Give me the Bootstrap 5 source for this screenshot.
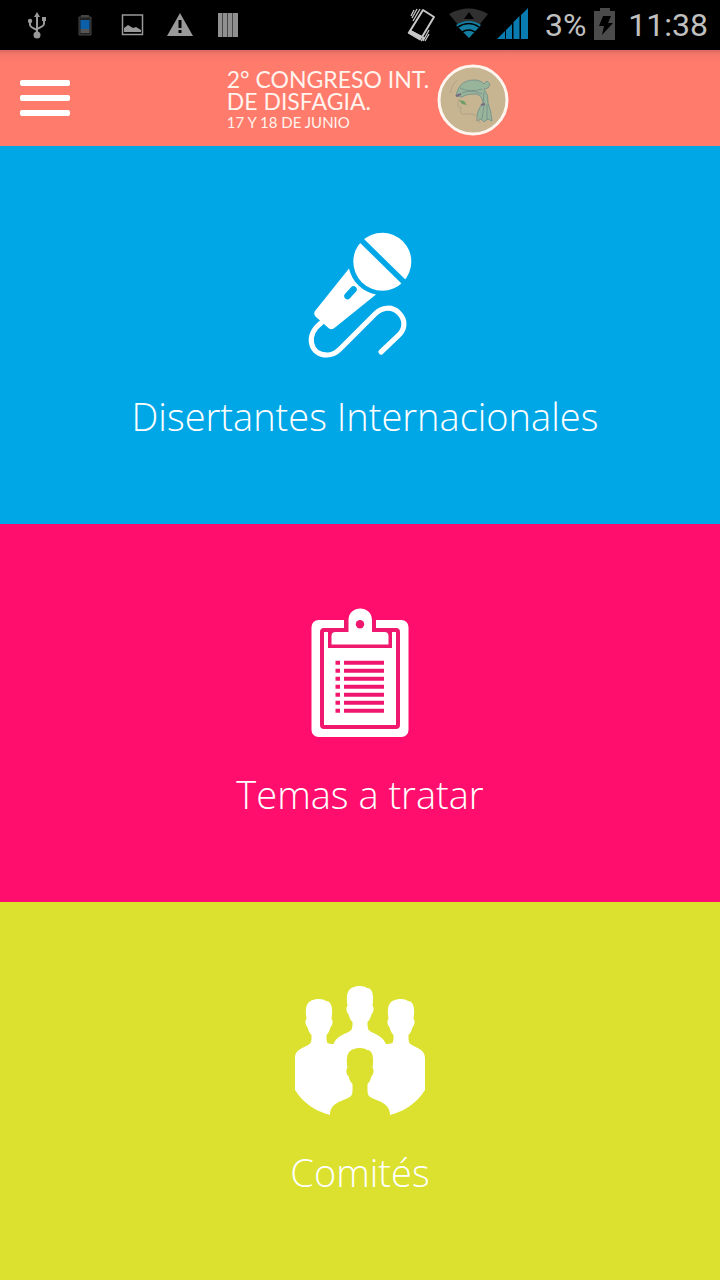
<!DOCTYPE html>
<html lang="es">
<head>
<meta charset="utf-8">
<meta name="viewport" content="width=device-width, initial-scale=1">
<title>2° Congreso Int. de Disfagia</title>
<link href="https://cdn.jsdelivr.net/npm/bootstrap@5.3.0/dist/css/bootstrap.min.css" rel="stylesheet">
<style>
  body { font-family: "Open Sans", "Noto Sans", sans-serif; }
  .status-strip { height: 50px; padding: 0 12px 0 13px; background: #000; color: #c0c0c0; font: 400 32px/52px Roboto, sans-serif; }
  .top-header {
    height: 96px; padding: 0 4px 0 20px; background: #ff7b6b linear-gradient(#d9695f, #f5766a 4px, #ff7b6b 12px) no-repeat;
    display: grid; grid-template-columns: 1fr auto 1fr; align-items: center;
  }
  .menu-toggle { width: 50px; height: 36px; }
  .menu-toggle i { height: 6px; border-radius: 2px; background: #fff; }
  .event-name { font: 400 23px/22px Lato, sans-serif; color: #fff3ee; }
  .event-date { font-size: 15px; line-height: 20px; }
  .tile { color: #fff; gap: 32px; font-size: 38px; font-weight: 300; line-height: 48px; min-height: 240px; }
  .tile:hover { color: #fff; }
  .tile-blue { background: #00a7e7; --tile: #00a7e7; }
  .tile-pink { background: #ff0e6d; --tile: #f0186e; }
  .tile-lime { background: #dbe12e; --tile: #dbe12e; }
</style>
</head>
<body class="d-flex flex-column min-vh-100">

<div class="status-strip d-flex align-items-center justify-content-between">
  <div class="d-flex">
    <svg width="48" height="50" viewBox="0 0 48 50" fill="none" stroke="#999" stroke-width="2"><path d="M24 34V15M17 22v3q0 2 7 5M31 21v3q0 2-7 5"/><path d="M24 12l3 5h-6zM29 17h4v4h-4z" fill="#999" stroke="none"/><circle cx="17" cy="21" r="2.200" fill="#999" stroke="none"/><circle cx="24" cy="35" r="3.500" fill="#999" stroke="none"/></svg>
    <svg width="48" height="50" viewBox="0 0 48 50"><path d="M18 17h12v18H18z" fill="#222" stroke="#444"/><path d="M20 15h8v2h-8z" fill="#444"/><path d="M19.500 20h9v9h-9z" fill="#0a5fa8"/><path d="M19.500 29h9v4h-9z" fill="#555"/></svg>
    <svg width="48" height="50" viewBox="0 0 48 50"><path d="M13.500 15h20v19.500h-20z" fill="none" stroke="#999" stroke-width="1.500"/><path d="M15 32v-4l4-3 5 3 3-1 5 3v2z" fill="#999"/></svg>
    <svg width="48" height="50" viewBox="0 0 48 50"><path d="M23 13l13 23H10z" fill="#999"/><path d="M21.500 20h3v8h-3zM21.500 30h3v3h-3z" fill="#000"/></svg>
    <svg width="48" height="50" viewBox="0 0 48 50"><path d="M13 13h4.500v24h-4.500zM18 13h4.500v24h-4.500zM23 13h4.500v24h-4.500zM28 13h5v24h-5z" fill="#909090"/></svg>
  </div>
  <div class="d-flex align-items-center">
    <svg width="30" height="50" viewBox="0 0 30 50" fill="none" stroke="#c8c8c8"><path d="M16 10l11 7-12 20-12-6z" stroke-width="2" stroke-linejoin="round"/><path d="M3 30l12 7-2 3-12-7z" fill="#c8c8c8"/><path d="M13 9L6 21M10 9L5 18M7 10l-3 6M22 30l-6 11M22 34l-4 7M17 37l-3 4" stroke-width="1.300"/></svg>
    <svg class="ms-2" width="48" height="50" viewBox="0 0 48 50"><path d="M4 14q20-11 39 0L24 38z" fill="#303030"/><path d="M24 12l5 7H19z" fill="#000"/><path d="M11 25q13-8 25 0L24 38z" fill="#157fa3"/><path d="M13 27q11-7 21 0M17 32q7-4 13 0" fill="none" stroke="#000" stroke-width="1.500"/></svg>
    <svg width="48" height="50" viewBox="0 0 48 50"><path d="M4 39l8-8v8zM13 30l6-6v15h-6zM20.500 22l6-6v23h-6zM28 15l7-7v31h-7z" fill="#087bb0"/></svg>
    <span class="ms-1 me-2">3%</span>
    <svg width="22" height="50" viewBox="0 0 22 50"><path d="M0 11h6V8h10v3h5v29H0z" fill="#4b4b4b"/><path d="M9 16h8l-3 7h5L8 35l2-9H5z" fill="#000"/></svg>
    <time class="ms-2 ps-1">11:38</time>
  </div>
</div>

<header class="top-header">
  <button class="menu-toggle btn p-0 border-0 rounded-0 d-flex flex-column justify-content-between align-items-stretch" type="button" aria-label="Menú"><i></i><i></i><i></i></button>
  <div class="d-flex align-items-center gap-2 mt-1">
    <div>
      <h1 class="event-name mb-0 text-nowrap">2° CONGRESO INT.<br>DE DISFAGIA.</h1>
      <p class="event-name event-date mb-0">17 Y 18 DE JUNIO</p>
    </div>
    <svg width="72" height="72" viewBox="0 0 72 72" role="img" aria-label="Logo del congreso">
      <circle cx="36" cy="36" r="34" fill="#c7b491" stroke="#fff5ef" stroke-width="3"/>
      <g stroke="#7d958b" stroke-linejoin="round">
        <path d="M20 28q4-13 19-12 6 1 8 4l3-3 3 3-2 4-4 1q5 6 4 14 3 7 4 18l-4-2-4 3-3-3-4 2q-1-10 6-18-1-9-8-9-9 0-13 3l-6-1z" fill="#98b59c"/>
        <path d="M23 24q9 5 22 1M25 29q10-4 20 1M47 28q-1 10 0 13l-2 14M50 40v16" fill="none"/>
      </g>
      <path d="M19 32l5-2M44 41l4-1" fill="none" stroke="#776b80" stroke-width="2"/>
      <path d="M20 16q-7 7-6 13M22 35q-3 8 2 9-2 7 4 6 13-2 15 9" fill="none" stroke="#b3a487"/>
      <path d="M22 36l5 1 3 4-5-1z" fill="#6f9d68"/>
    </svg>
  </div>
</header>

<main class="d-flex flex-column flex-grow-1">
  <a href="#disertantes" class="tile tile-blue d-flex flex-column flex-fill align-items-center justify-content-center text-decoration-none text-center">
    <svg width="130" height="130" viewBox="0 0 130 130" fill="#fff" aria-hidden="true">
      <circle cx="87.300" cy="31.700" r="29"/>
      <path d="M62 6l52 51" stroke="var(--tile)" stroke-width="5.500"/>
      <path d="M54 38.500A34 34 0 0 0 81 64.500L40 97.500q-3 3-6 1L21 87q-3-3-1-6z"/>
      <path d="M52.500 66l6-6.500" stroke="var(--tile)" stroke-width="6.500" stroke-linecap="round"/>
      <path d="M26 93C10 105 15 125 32 125c6 0 10-3 13-6l35-35c7-7 17-8 24-1s6 16 0 22l-18 17" fill="none" stroke="#fff" stroke-width="5.200" stroke-linecap="round"/>
    </svg>
    <span>&nbsp;Disertantes Internacionales</span>
  </a>
  <a href="#temas" class="tile tile-pink d-flex flex-column flex-fill align-items-center justify-content-center text-decoration-none text-center">
    <svg width="130" height="130" viewBox="0 0 130 130" fill="#fff" aria-hidden="true">
      <rect x="16.500" y="12" width="97" height="117" rx="7"/>
      <rect x="27" y="22" width="76" height="97" rx="2" fill="none" stroke="var(--tile)" stroke-width="4"/>
      <path d="M49 12h32v12h16v16H33V24h16z" fill="var(--tile)"/>
      <path d="M36.500 36.500V28q0-4 4-4h13V12C53.500-3.500 77-3.500 77 12v12h12.500q4 0 4 4v8.500z"/>
      <circle cx="65" cy="16.200" r="4.200" fill="var(--tile)"/>
      <path d="M40.500 54.700h4.500M49 54.700h40M40.500 62.700h4.500M49 62.700h40M40.500 70.700h4.500M49 70.700h40M40.500 78.700h4.500M49 78.700h40M40.500 86.700h4.500M49 86.700h40M40.500 94.700h4.500M49 94.700h40M40.500 102.700h4.500M49 102.700h40" stroke="var(--tile)" stroke-width="4"/>
    </svg>
    <span>Temas a tratar</span>
  </a>
  <a href="#comites" class="tile tile-lime d-flex flex-column flex-fill align-items-center justify-content-center text-decoration-none text-center">
    <svg width="130" height="130" viewBox="0 0 130 130" fill="#fff" aria-hidden="true">
      <defs>
        <path id="face" d="M-12.500 20C-13.500 14-13.500 8-11.500 5-8-1 4-1 7 2c6 0 7 8 5.500 18 2 1 1 7-1 8-1 4-2 6-4 8v11h-15V36c-2-2-3-4-4-8-2-1-3-7-1-8z"/>
      </defs>
      <use href="#face" x="65" y="0"/>
      <use href="#face" x="24" y="13"/>
      <use href="#face" x="106" y="13"/>
      <path d="M57.500 40c0 9-13 5-19 18C33 58 31.500 57 31.500 54h-15c0 8-16.500 6-16.500 18v32q12 19 35 25h60q23-6 35-25V72c0-12-16.500-10-16.500-18h-15c0 3-2 4-7.500 4C85 45 72.500 49 72.500 40z"/>
      <g fill="var(--tile)">
        <use href="#face" x="65" y="62"/>
        <path d="M57.500 106c0 10-22.500 6-22.500 23v1h60v-1c0-17-22.500-13-22.500-23z"/>
      </g>
    </svg>
    <span>Comités</span>
  </a>
</main>

<script src="https://cdn.jsdelivr.net/npm/bootstrap@5.3.0/dist/js/bootstrap.bundle.min.js"></script>
</body>
</html>
